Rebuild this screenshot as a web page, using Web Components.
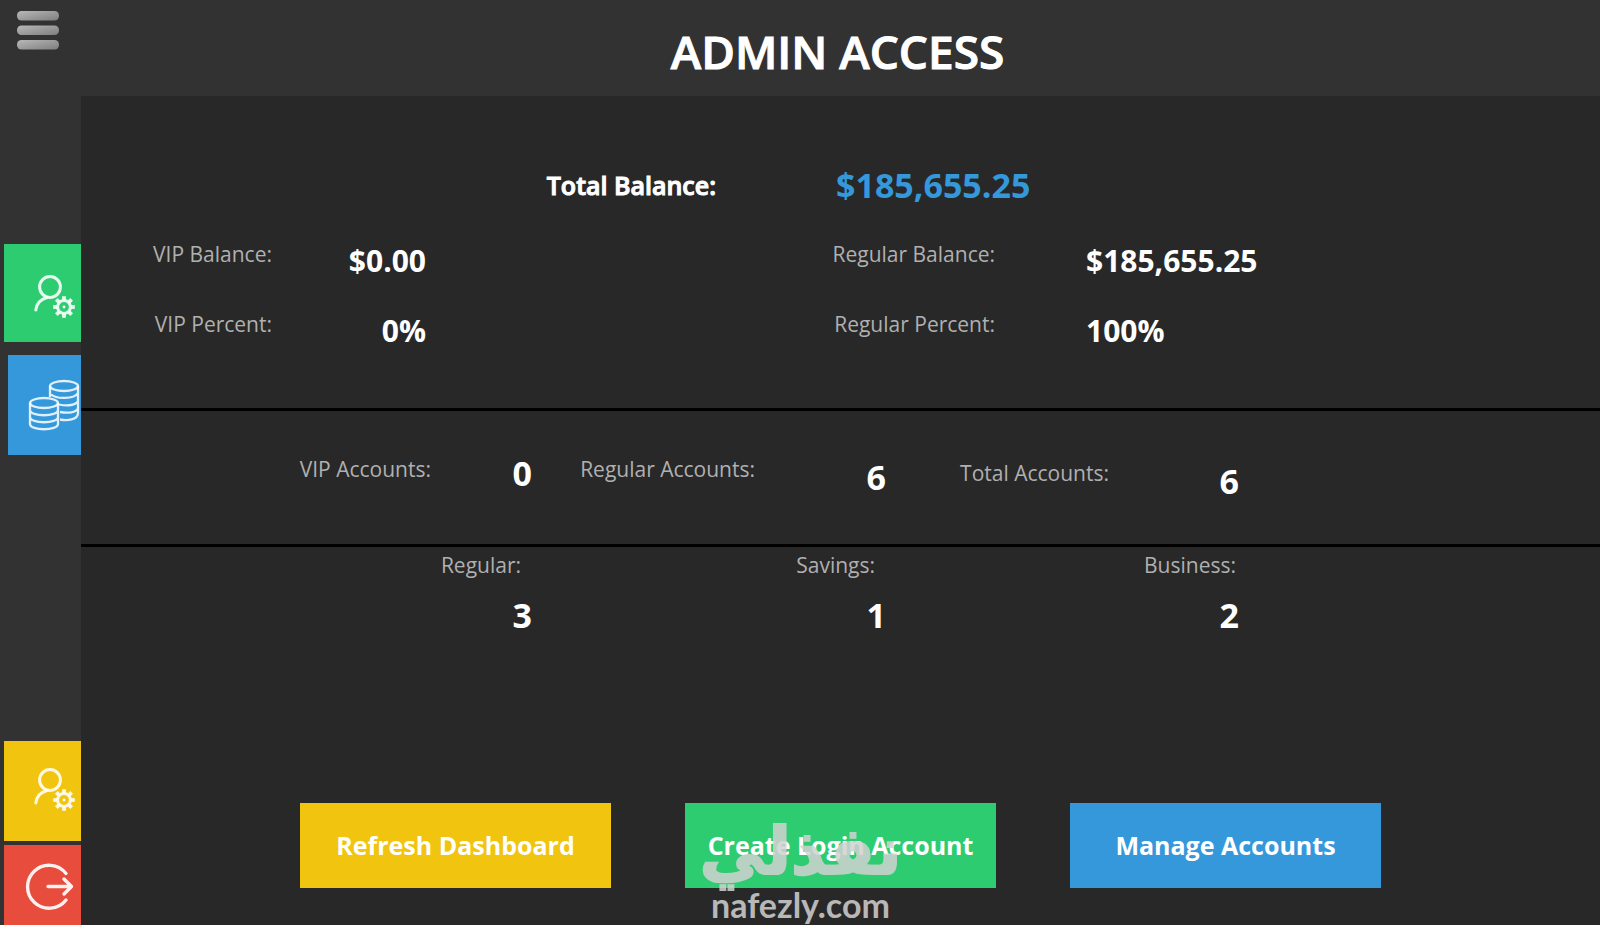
<!DOCTYPE html>
<html lang="en">
<head>
<meta charset="utf-8">
<meta name="viewport" content="width=device-width, initial-scale=1">
<title>Admin Access</title>
<style>
  body {
    margin: 0;
    background: #282828;
    color: #fff;
    font-family: "Open Sans", "Noto Sans", sans-serif;
  }
</style>
</head>
<body>
<admin-app>
  <side-nav slot="nav">
    <nav-button icon="user" tone="green" label="User settings"></nav-button>
    <nav-button icon="coins" tone="blue" label="Balances"></nav-button>
    <nav-button slot="bottom" icon="user" tone="yellow" label="Account settings"></nav-button>
    <nav-button slot="bottom" icon="exit" tone="red" label="Log out"></nav-button>
  </side-nav>
  <span slot="title">ADMIN ACCESS</span>

  <total-balance label="Total Balance:">$185,655.25</total-balance>

  <stat-grid kind="balances">
    <stat-item label="VIP Balance:">$0.00</stat-item>
    <stat-item label="Regular Balance:" align="start">$185,655.25</stat-item>
    <stat-item label="VIP Percent:">0%</stat-item>
    <stat-item label="Regular Percent:" align="start">100%</stat-item>
  </stat-grid>

  <stat-grid kind="accounts">
    <stat-item label="VIP Accounts:">0</stat-item>
    <stat-item label="Regular Accounts:" value-drop="1">6</stat-item>
    <stat-item label="Total Accounts:" label-drop="1" value-drop="2">6</stat-item>
  </stat-grid>

  <stat-grid kind="types">
    <stat-item stacked label="Regular:">3</stat-item>
    <stat-item stacked label="Savings:">1</stat-item>
    <stat-item stacked="tight" label="Business:">2</stat-item>
  </stat-grid>

  <action-button slot="actions" tone="yellow">Refresh Dashboard</action-button>
  <action-button slot="actions" tone="green">Create Login Account</action-button>
  <action-button slot="actions" tone="blue">Manage Accounts</action-button>
  <site-watermark slot="actions"></site-watermark>
</admin-app>

<script>
const TONES = `
  :host([tone="green"])  { --tone: #2ecc71; }
  :host([tone="blue"])   { --tone: #3498db; }
  :host([tone="yellow"]) { --tone: #f1c40f; }
  :host([tone="red"])    { --tone: #e74c3c; }
`;

const gearTeeth = Array.from({ length: 8 }, (_, i) =>
  `<path d="M60 56V52.2" transform="rotate(${i * 45} 60 63)" stroke-width="3.8"/>`).join('');

const ICONS = {
  user: `<svg width="77" height="98" viewBox="0 0 77 98" fill="none" stroke="#fff" stroke-opacity=".88" stroke-width="3" stroke-linecap="round" aria-hidden="true">
    <circle cx="46" cy="43" r="10.4"/>
    <path d="M43 53.500C36 55.500 32.500 59.500 31.800 66"/>
    <g stroke-linecap="butt"><circle cx="60" cy="63" r="6.400"/>${gearTeeth}</g>
    <circle cx="60" cy="63" r="1.400" fill="#fff" stroke="none"/></svg>`,
  coins: `<svg width="73" height="100" viewBox="0 0 73 100" fill="none" stroke="#fff" stroke-opacity=".85" stroke-width="2.3" aria-hidden="true">
    <ellipse cx="56" cy="31" rx="14" ry="5"/>
    <path d="M42 31V42M70 31V59M43 39.500C48 44 66 44.500 70 38M51 49.500C60 51.500 68 50 70 46M52 57C60 58.500 68 57.500 70 53.500M52 64.500C60 66 69 64.500 70 59"/>
    <ellipse cx="36" cy="48" rx="14" ry="5"/>
    <path d="M22 48V69C22 76 50 76 50 69V48M22 55C22 62 50 62 50 55M22 62C22 69 50 69 50 62"/></svg>`,
  exit: `<svg width="77" height="80" viewBox="0 0 77 80" fill="none" stroke="#fff" stroke-opacity=".92" stroke-width="3.4" stroke-linecap="round" stroke-linejoin="round" aria-hidden="true">
    <path d="M62 28.500A21.500 21.500 0 1 0 62 55"/>
    <path d="M44 41.500H67.500M60 34L67.500 41.500L60 49"/></svg>`
};

class ShadowElement extends HTMLElement {
  connectedCallback() {
    if (this.shadowRoot) return;
    this.attachShadow({ mode: 'open' }).innerHTML = this.template();
  }
  text(name) { return this.getAttribute(name) || ''; }
}

customElements.define('admin-app', class extends ShadowElement {
  template() {
    return `<style>
      :host { display: grid; grid-template-columns: 81px minmax(0, 1fr); grid-template-rows: 96px 1fr; min-height: 100vh; }
      .nav { grid-row: 1 / 3; display: grid; background: #323232; }
      header { background: #323232; display: flex; justify-content: center; align-items: center; padding: 6px 6px 0 0; box-sizing: border-box; }
      h1 { margin: 0; font-size: 46px; line-height: 64px; font-weight: 600; -webkit-text-stroke: 1px #fff; }
      main { display: flex; flex-direction: column; background: #282828; }
      footer { position: relative; display: flex; justify-content: center; gap: 74px; margin-top: auto; padding: 0 16px 37px; }
    </style>
    <div class="nav"><slot name="nav"></slot></div>
    <header><h1><slot name="title"></slot></h1></header>
    <main><slot></slot><footer><slot name="actions"></slot></footer></main>`;
  }
});

customElements.define('side-nav', class extends ShadowElement {
  template() {
    return `<style>
      :host { display: block; }
      nav { display: flex; flex-direction: column; align-items: flex-end; height: 100%; }
      .menu { align-self: flex-start; display: block; border: 0; padding: 10px 16px; margin: 0 0 184px; background: none; }
      svg { display: block; }
      .top { display: flex; flex-direction: column; align-items: flex-end; gap: 13px; }
      .bottom { display: flex; flex-direction: column; align-items: flex-end; gap: 4px; margin-top: auto; }
    </style>
    <nav aria-label="Main">
      <button class="menu" type="button" aria-label="Menu">
        <svg width="44" height="40" viewBox="0 0 44 40" aria-hidden="true">
          <defs><linearGradient id="bar" x1="0" x2="1" y1="0" y2="1"><stop stop-color="#b8b8b8"/><stop offset="1" stop-color="#7e7e7e"/></linearGradient></defs>
          <g fill="url(#bar)"><rect x="1" y="1" width="42" height="9.500" rx="4.500"/><rect x="1" y="15.500" width="42" height="9.500" rx="4.500"/><rect x="1" y="30" width="42" height="9.500" rx="4.500"/></g>
        </svg>
      </button>
      <div class="top"><slot></slot></div>
      <div class="bottom"><slot name="bottom"></slot></div>
    </nav>`;
  }
});

customElements.define('nav-button', class extends ShadowElement {
  template() {
    return `<style>
      ${TONES}
      :host { display: block; }
      button { display: block; border: 0; padding: 0; background: var(--tone); }
      :host([tone="yellow"]) button { padding-bottom: 2px; }
      :host([tone="yellow"]) svg { margin-top: -4px; padding-bottom: 4px; }
      svg { display: block; }
    </style>
    <button type="button" aria-label="${this.text('label')}">${ICONS[this.text('icon')]}</button>`;
  }
});

customElements.define('total-balance', class extends ShadowElement {
  template() {
    return `<style>
      :host { display: block; padding-top: 65px; }
      dl { display: grid; grid-template-columns: 635fr 884fr; align-items: center; margin: 0; }
      dt { text-align: right; font-size: 25px; line-height: 48px; font-weight: 600; -webkit-text-stroke: 1px #fff; }
      dd { margin: 0; padding-left: 120px; color: #3498db; font-size: 34px; line-height: 48px; font-weight: 700; }
    </style>
    <dl><dt>${this.text('label')}</dt><dd><slot></slot></dd></dl>`;
  }
});

customElements.define('stat-grid', class extends ShadowElement {
  template() {
    return `<style>
      :host { display: block; }
      div { display: grid; align-items: start; box-sizing: border-box; }
      :host([kind="balances"]) div {
        grid-template-columns: 191fr 154fr 569fr 605fr;
        grid-auto-rows: 70px; padding-top: 27px; height: 199px;
        --value-size: 30px; --value-top: 9px; --value-pad: 91px;
      }
      :host([kind="accounts"]) div {
        grid-template-columns: 350fr 101fr 223fr 131fr 223fr 130fr 361fr;
        border: solid #000; border-width: 3px 0; padding-top: 40px; height: 139px;
      }
      :host([kind="types"]) div {
        grid-template-columns: 451fr 354fr 353fr 361fr;
      }
    </style>
    <div><slot></slot></div>`;
  }
});

customElements.define('stat-item', class extends ShadowElement {
  template() {
    return `<style>
      :host { display: contents; }
      .label { text-align: right; color: #b0b0b0; font-size: 21px; line-height: 32px; white-space: nowrap; padding-top: 2px; }
      .value { text-align: right; font-weight: 700; font-size: var(--value-size, 34px); line-height: 32px; padding-top: var(--value-top, 6px); }
      :host([align="start"]) .value { text-align: left; padding-left: var(--value-pad); }
      :host([label-drop="1"]) .label { padding-top: 6px; }
      :host([value-drop="1"]) .value { padding-top: 10px; }
      :host([value-drop="2"]) .value { padding-top: 14px; }
      :host([stacked]) { display: block; }
      :host([stacked]) .label { padding-right: 11px; }
      :host([stacked="tight"]) .label { padding-right: 3px; }
      :host([stacked]) .value { padding-top: 18px; }
    </style>
    <div class="label" id="label">${this.text('label')}</div>
    <div class="value" role="group" aria-labelledby="label"><slot></slot></div>`;
  }
});

customElements.define('action-button', class extends ShadowElement {
  template() {
    return `<style>
      ${TONES}
      :host { display: block; flex: 0 1 311px; }
      button { display: block; width: 100%; border: 0; padding: 20px 0 21px; background: var(--tone); color: #fff; font: 700 25px/44px "Open Sans", "Noto Sans", sans-serif; white-space: nowrap; }
    </style>
    <button type="button"><slot></slot></button>`;
  }
});

customElements.define('site-watermark', class extends ShadowElement {
  template() {
    return `<style>
      :host { position: absolute; left: 50%; bottom: 2px; width: 200px; margin-left: -140px; color: #d2d2d2; opacity: .85; text-align: center; pointer-events: none; }
      .ar { font: 700 66px/70px "DejaVu Sans", sans-serif; -webkit-text-stroke: 2px #d2d2d2; white-space: nowrap; display: flex; justify-content: center; }
      .en { font: 700 34px/36px Lato, sans-serif; }
    </style>
    <div class="ar" lang="ar" dir="rtl">نفذلي</div>
    <div class="en">nafezly.com</div>`;
  }
});
</script>
</body>
</html>
